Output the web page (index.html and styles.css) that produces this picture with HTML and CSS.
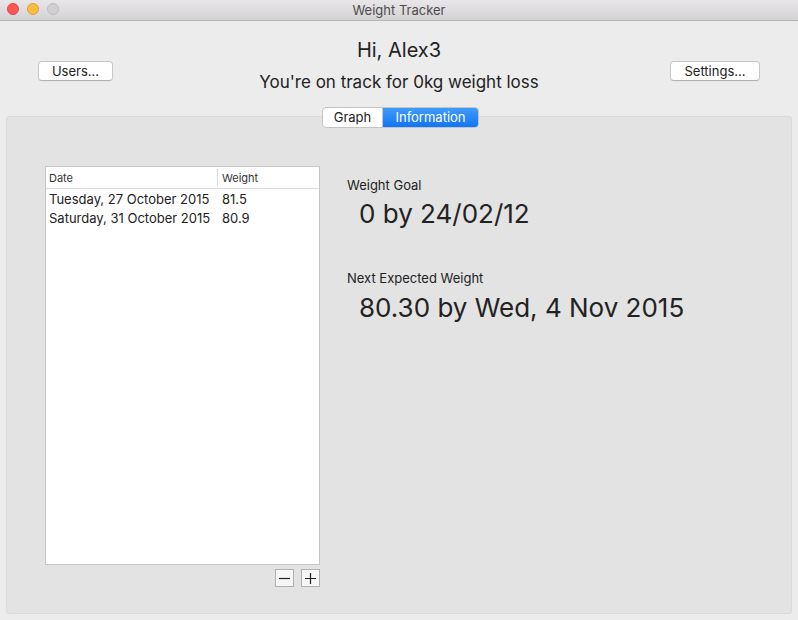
FILE: index.html
```html
<!DOCTYPE html>
<html>
<head>
<meta charset="utf-8">
<link rel="stylesheet" href="styles.css">
</head>
<body>
<div class="window">
  <div class="titlebar">
    <div class="lights">
      <span class="light red"></span>
      <span class="light yellow"></span>
      <span class="light gray"></span>
    </div>
    <div class="title">Weight Tracker</div>
  </div>
  <div class="header">
    <div class="hleft"><button class="btn users">Users...</button></div>
    <div class="greeting">
      <div class="hi">Hi, Alex3</div>
      <div class="track">You're on track for 0kg weight loss</div>
    </div>
    <div class="hright"><button class="btn settings">Settings...</button></div>
  </div>
  <div class="tabbox">
    <div class="segmented">
      <span class="seg">Graph</span>
      <span class="seg active">Information</span>
    </div>
    <div class="content">
      <div class="left">
        <div class="table">
          <div class="thead">
            <div class="th c1">Date</div>
            <div class="th c2">Weight</div>
          </div>
          <div class="row"><div class="c1">Tuesday, 27 October 2015</div><div class="c2">81.5</div></div>
          <div class="row"><div class="c1">Saturday, 31 October 2015</div><div class="c2">80.9</div></div>
        </div>
        <div class="pm">
          <span class="pmbtn"><svg width="11" height="11" viewBox="0 0 11 11"><path d="M0 5.5H11" stroke="#222" stroke-width="1.2"/></svg></span>
          <span class="pmbtn"><svg width="11" height="11" viewBox="0 0 11 11"><path d="M0 5.5H11M5.5 0V11" stroke="#222" stroke-width="1.2"/></svg></span>
        </div>
      </div>
      <div class="right">
        <div class="label">Weight Goal</div>
        <div class="value">0 by 24/02/12</div>
        <div class="label second">Next Expected Weight</div>
        <div class="value">80.30 by Wed, 4 Nov 2015</div>
      </div>
    </div>
  </div>
</div>
</body>
</html>
```
FILE: styles.css
```css
* { box-sizing: border-box; }
html, body { margin: 0; padding: 0; }
body {
  width: 798px; height: 620px; overflow: hidden;
  font-family: Inter, "Liberation Sans", Arial, sans-serif;
  color: #222;
  background: #ececec;
}
.window { width: 798px; height: 620px; background: #ececec; display: flex; flex-direction: column; }
.titlebar {
  height: 21px; flex: none;
  background: linear-gradient(#e8e6e8, #d4d2d4);
  border-bottom: 1px solid #b4b4b4;
  position: relative;
  display: flex; align-items: center; justify-content: center;
}
.lights { position: absolute; left: 7px; top: 3px; display: flex; gap: 8px; }
.light { width: 12px; height: 12px; border-radius: 50%; display: block; }
.red { background: #fc5753; border: 1px solid #df4744; }
.yellow { background: #fdbc40; border: 1px solid #de9f34; }
.gray { background: #d0d0d0; border: 1px solid #bdbdbd; }
.title { font-size: 13px; color: #4d4d4d; }
.header {
  height: 95px; flex: none;
  display: grid; grid-template-columns: 1fr auto 1fr;
  align-items: start;
  padding: 0 38px 0 38px;
}
.hleft { display: flex; justify-content: flex-start; }
.hright { display: flex; justify-content: flex-end; }
.btn {
  margin-top: 40px;
  height: 20px;
  font-family: inherit; font-size: 13px; color: #222;
  background: #fff;
  border: 1px solid #c8c8c8; border-bottom-color: #b2b2b2;
  border-radius: 4px;
  padding: 0;
  box-shadow: 0 0.5px 0 rgba(0,0,0,0.05);
}
.users { width: 75px; }
.settings { width: 90px; }
.greeting { text-align: center; padding-top: 17px; }
.hi { font-size: 20px; line-height: 24px; }
.track { font-size: 17px; line-height: 20px; margin-top: 10px; }
.tabbox {
  margin: 0 6px 6px 6px;
  flex: 1;
  background: #e3e3e3;
  border: 1px solid #dadada;
  border-radius: 3px;
  position: relative;
  padding: 49px 0 0 38px;
}
.segmented {
  position: absolute; top: -10px; left: 315px;
  display: flex; height: 21px;
  border-radius: 4px; overflow: hidden;
  border: 1px solid #c4c4c4;
  background: #fff;
  font-size: 13px;
}
.seg { display: flex; align-items: center; justify-content: center; line-height: 19px; }
.seg:first-child { width: 60px; border-right: 1px solid #c4c4c4; color: #222; }
.seg.active { width: 95px; color: #fff; background: linear-gradient(#3f9cfb, #1374f5); }
.content { display: flex; }
.left { width: 275px; display: flex; flex-direction: column; }
.table {
  height: 399px;
  background: #fff;
  border: 1px solid #c6c6c6;
  font-size: 13px;
}
.thead { height: 22px; display: flex; border-bottom: 1px solid #dcdcdc; font-size: 11px; color: #333; }
.th { display: flex; align-items: center; }
.thead .c1 { border-right: 1px solid #dcdcdc; margin: 2px 0; }
.c1 { width: 172px; padding-left: 3px; }
.c2 { padding-left: 4px; }
.row { display: flex; height: 19px; align-items: center; }
.pm { display: flex; justify-content: flex-end; gap: 7px; margin-top: 4px; }
.pmbtn {
  width: 19px; height: 18px;
  border: 1px solid #b0b0b0;
  background: #f6f6f6;
  display: flex; align-items: center; justify-content: center;
}
.right { padding-left: 27px; padding-top: 12px; }
.label { font-size: 13px; line-height: 15px; color: #222; }
.label.second { margin-top: 41px; }
.value { font-size: 26px; line-height: 32px; padding-left: 12px; margin-top: 5px; color: #222; }
.label.second + .value { margin-top: 6px; }
```
